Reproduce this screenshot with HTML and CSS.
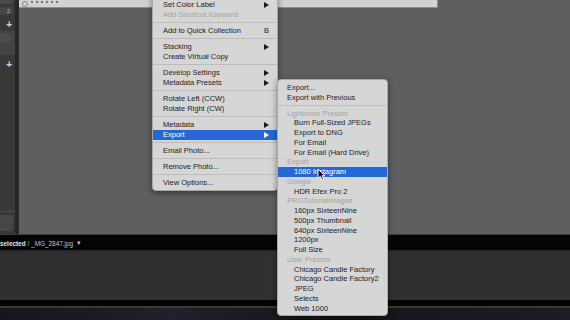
FILE: index.html
```
<!DOCTYPE html>
<html lang="en">
<head>
  <meta charset="UTF-8">
  <title>Library - Export menu</title>
  <link rel="stylesheet" href="styles.css">
</head>
<body>
<div class="app">

  <div class="workspace">
    <aside class="left-panel">
      <div class="lp-top"></div>
      <div class="lp-count">2</div>
      <div class="lp-add">+</div>
      <div class="lp-section"><div class="lp-pill"></div></div>
      <div class="lp-add">+</div>
      <div class="lp-fill"></div>
      <div class="lp-box"></div>
    </aside>
    <main class="grid-view">
      <div class="toolbar">
        <span class="sync-icon"></span>
        <span class="stars"><i></i><i></i><i></i><i></i><i></i><i></i></span>
      </div>
    </main>
  </div>

  <div class="status-bar">
    <span class="sel">selected</span>
    <span class="file">/ _MG_2847.jpg</span>
    <span class="caret">▾</span>
  </div>
  <div class="filmstrip"></div>
  <div class="filmstrip-gap"></div>
  <div class="thumbs"></div>

  <!-- context menu -->
  <div class="menu main-menu">
    <div class="item sub">Set Color Label</div>
    <div class="item off">Add Shortcut Keyword</div>
    <div class="sep"></div>
    <div class="item">Add to Quick Collection<span class="key">B</span></div>
    <div class="sep"></div>
    <div class="item sub">Stacking</div>
    <div class="item">Create Virtual Copy</div>
    <div class="sep"></div>
    <div class="item sub">Develop Settings</div>
    <div class="item sub">Metadata Presets</div>
    <div class="sep"></div>
    <div class="item">Rotate Left (CCW)</div>
    <div class="item">Rotate Right (CW)</div>
    <div class="sep"></div>
    <div class="item sub">Metadata</div>
    <div class="item sub active">Export</div>
    <div class="sep"></div>
    <div class="item">Email Photo...</div>
    <div class="sep"></div>
    <div class="item">Remove Photo...</div>
    <div class="sep"></div>
    <div class="item">View Options...</div>
  </div>

  <div class="menu sub-menu">
    <div class="item">Export...</div>
    <div class="item">Export with Previous</div>
    <div class="sep"></div>
    <div class="item head">Lightroom Presets</div>
    <div class="item ind">Burn Full-Sized JPEGs</div>
    <div class="item ind">Export to DNG</div>
    <div class="item ind">For Email</div>
    <div class="item ind">For Email (Hard Drive)</div>
    <div class="item head">Export</div>
    <div class="item ind active">1080 Instagram</div>
    <div class="item head">Google</div>
    <div class="item ind">HDR Efex Pro 2</div>
    <div class="item head">PROTutorialImages</div>
    <div class="item ind">160px SixteenNine</div>
    <div class="item ind">500px Thumbnail</div>
    <div class="item ind">640px SixteenNine</div>
    <div class="item ind">1200px</div>
    <div class="item ind">Full Size</div>
    <div class="item head">User Presets</div>
    <div class="item ind">Chicago Candle Factory</div>
    <div class="item ind">Chicago Candle Factory2</div>
    <div class="item ind">JPEG</div>
    <div class="item ind">Selects</div>
    <div class="item ind">Web 1000</div>
  </div>

  <svg class="cursor" width="9" height="13" viewBox="0 0 9 13">
    <path d="M1 1 L1 10.5 L3.3 8.4 L5 12 L6.6 11.3 L5 7.8 L8 7.8 Z" fill="#111" stroke="#fff" stroke-width="1"/>
  </svg>

</div>
</body>
</html>
```

FILE: styles.css
```
* {
  box-sizing: border-box;
}
body {
  margin: 0;
  background: #000;
  font-family: "Liberation Sans", Arial, sans-serif;
}
.app {
  position: relative;
  width: 570px;
  height: 320px;
  overflow: hidden;
  display: flex;
  flex-direction: column;
}

/* top area */
.workspace {
  display: flex;
  height: 235px;
  border-bottom: 1px solid #3e3e3e;
}
.left-panel {
  width: 19px;
  background: #383838;
  border-right: 4px solid #262626;
  display: flex;
  flex-direction: column;
  align-items: stretch;
}
.lp-top {
  height: 4px;
  margin: 0 2px 3px 0;
  background: #4a4a4a;
  border-radius: 0 0 3px 0;
}
.lp-count {
  height: 8px;
  margin-right: 2px;
  background: #454545;
  border-radius: 0 3px 3px 0;
  color: #bbb;
  font-size: 6px;
  line-height: 8px;
  text-align: right;
  padding-right: 3px;
}
.lp-add {
  height: 10px;
  margin-top: 5px;
  color: #d8d8d8;
  font-size: 10px;
  font-weight: bold;
  line-height: 10px;
  text-align: right;
  padding-right: 3px;
}
.lp-section {
  height: 24px;
  margin-top: 1px;
  background: #434343;
  padding-top: 2px;
}
.lp-pill {
  height: 10px;
  margin-right: 3px;
  background: #4c4c4c;
  border-radius: 0 5px 5px 0;
}
.lp-fill {
  flex: 1;
  border-bottom: 1px solid #4a4a4a;
}
.lp-box {
  height: 16px;
  margin: 3px 2px 3px 0;
  background: #474747;
  border-radius: 0 3px 3px 0;
}
.grid-view {
  flex: 1;
  background: #5f5f61;
}
.toolbar {
  width: 419px;
  height: 8px;
  background: #d2d2d2;
  border-bottom: 1px solid #8c8c8c;
  border-right: 1px solid #8c8c8c;
  display: flex;
  align-items: center;
  gap: 3px;
  padding-left: 3px;
}
.sync-icon {
  width: 6px;
  height: 6px;
  border: 1px solid #888;
  border-radius: 50%;
}
.stars {
  display: flex;
  gap: 3px;
  margin-top: -4px;
}
.stars i {
  width: 2px;
  height: 2px;
  background: #777;
}

/* bottom bars */
.status-bar {
  height: 17px;
  background: #040404;
  border-bottom: 2px solid #2a2a2a;
  display: flex;
  align-items: center;
  gap: 2px;
  padding-top: 1px;
  font-size: 6.4px;
}
.sel {
  color: #e6e6e6;
  font-weight: bold;
}
.file {
  color: #c4c4c4;
}
.caret {
  color: #c4c4c4;
  font-size: 6.5px;
  margin-left: 2px;
}
.filmstrip {
  height: 48px;
  background: #303031;
}
.filmstrip-gap {
  height: 8px;
  background: #040404;
  border-bottom: 2px solid #3a3a3a;
}
.thumbs {
  flex: 1;
  background: linear-gradient(90deg, #15151a, #22202a 30%, #141418 60%, #1e1c24);
}

/* menus */
.menu {
  position: absolute;
  background: #d6d6d6;
  color: #1c1c1c;
  font-size: 7.5px;
  box-shadow: 0 2px 6px rgba(0, 0, 0, 0.45);
  border: 1px solid #a9a9a9;
}
.main-menu {
  left: 152px;
  top: -5px;
  width: 126px;
  padding: 4px 0 2px;
  border-radius: 0 0 4px 4px;
}
.main-menu .item {
  height: 10px;
  line-height: 10px;
  padding-left: 10px;
}
.sub-menu {
  left: 277px;
  top: 79px;
  width: 111px;
  padding: 3px 0 2px;
  border-radius: 4px;
}
.sub-menu .item {
  height: 9.75px;
  line-height: 9.75px;
  padding-left: 9px;
}
.item {
  position: relative;
  white-space: nowrap;
}
.sub-menu .ind {
  padding-left: 16px;
}
.off,
.head {
  color: #a4a4a4;
}
.active {
  background: #2468d8;
  color: #fff;
}
.sub::after {
  content: "";
  position: absolute;
  right: 8px;
  top: 2px;
  border-left: 5px solid #1c1c1c;
  border-top: 3px solid transparent;
  border-bottom: 3px solid transparent;
}
.sub.active::after {
  border-left-color: #fff;
}
.key {
  position: absolute;
  right: 8px;
}
.sep {
  height: 6px;
  position: relative;
}
.sep::after {
  content: "";
  position: absolute;
  left: 0;
  right: 0;
  top: 2px;
  height: 1px;
  background: #bcbcbc;
}
.cursor {
  position: absolute;
  left: 317px;
  top: 168px;
}
```
